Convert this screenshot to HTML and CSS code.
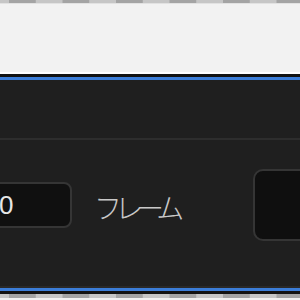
FILE: index.html
```html
<!DOCTYPE html>
<html lang="ja">
<head>
    <meta charset="UTF-8">
    <meta name="viewport" content="width=device-width, initial-scale=1.0">
    <title>フレーム</title>
    <link rel="stylesheet" href="styles.css">
</head>
<body>

<div class="checker"></div>
<div class="toolbar"></div>
<div class="rule"></div>

<div class="frame">
    <div class="panel">
        <div class="panel-header"></div>
        <div class="panel-body">
            <!-- Frame row: value / label / preview -->
            <div class="field-row">
                <div class="num-box">0</div>
                <div class="field-label">フレーム</div>
                <div class="preview-box"></div>
            </div>
        </div>
    </div>
</div>

<div class="checker bottom"></div>

</body>
</html>
```

FILE: styles.css
```css
/* General Reset */
* {
    margin: 0;
    padding: 0;
    box-sizing: border-box;
}
body {
    font-family: "Noto Sans CJK JP", "Noto Sans", sans-serif;
    background-color: #F2F2F2;
    width: 300px;
    height: 300px;
    overflow: hidden;
}

/* Checker strips (transparent canvas) */
.checker {
    height: 4px;
    background-color: #C6C6C6;
    background-image: linear-gradient(90deg, #A4A4A4 0 27px, #C6C6C6 27px 100%);
    background-size: 53.5px 3px;
    background-position: 9px 0;
    background-repeat: repeat-x;
    border-bottom: 1px solid #E2E2E2;
}
.checker.bottom {
    border-bottom: none;
    background-size: 53.5px 4px;
}

.toolbar {
    height: 68px;
    background-color: #F2F2F2;
}
.rule {
    height: 2px;
    background-color: #FFFFFF;
}

/* Dark panel with selection outline */
.frame {
    background-color: #121212;
    padding: 3px 0;
}
.panel {
    background-color: #1F1F1F;
    border-top: 3px solid #3B7DD8;
    border-bottom: 3px solid #3B7DD8;
    overflow: hidden;
}
.panel-header {
    height: 60px;
    border-bottom: 2px solid #2D2D2D;
}
.panel-body {
    padding: 29px 0 45px;
    border-bottom: 2px solid #292929;
}

.field-row {
    display: flex;
    align-items: center;
    margin-left: -28px;
    height: 72px;
}
.field-row > div {
    flex: none;
}
.num-box {
    width: 100px;
    height: 46px;
    background-color: #101010;
    border: 2px solid #353535;
    border-radius: 8px;
    padding-left: 25px;
    font-family: "Liberation Sans", sans-serif;
    font-size: 26px;
    line-height: 42px;
    color: #E6E6E6;
}
.field-label {
    width: 159px;
    margin-left: 22px;
    padding-top: 4px;
    font-size: 28px;
    font-weight: 300;
    letter-spacing: -7px;
    color: #C8C8C8;
}
.preview-box {
    width: 80px;
    height: 72px;
    background-color: #0F0F0F;
    border: 2px solid #353535;
    border-radius: 10px;
}
```
